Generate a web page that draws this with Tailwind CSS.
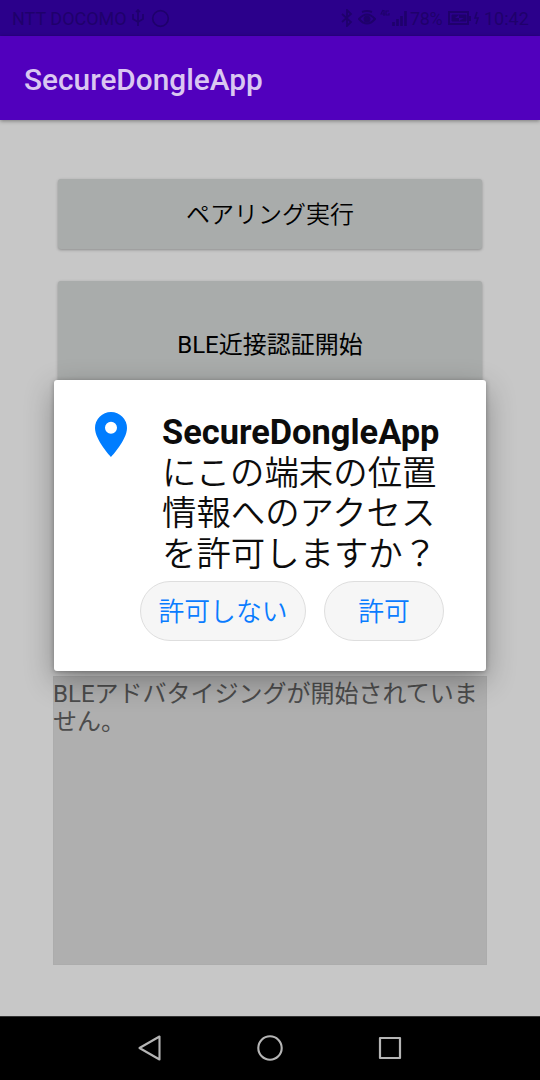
<!DOCTYPE html>
<html lang="ja">
<head>
<meta charset="utf-8">
<title>SecureDongleApp</title>
<script src="https://cdn.jsdelivr.net/npm/@tailwindcss/browser@4"></script>
</head>
<body class="font-['Roboto','Noto_Sans_CJK_JP',sans-serif] bg-[#c7c7c7]">
<div class="relative w-[540px] h-[1080px] overflow-hidden flex flex-col bg-[#c7c7c7]">
  <div class="h-9 shrink-0 bg-[#2b008b] flex items-center justify-between px-3 text-[18px] leading-9 text-[#1f006c]">
    <div class="flex items-center whitespace-nowrap">
      <span class="w-[115px] pt-0.5">NTT DOCOMO</span>
      <svg class="ml-1 w-3.5 h-[18px]" viewBox="0 0 14 18" fill="none" stroke="currentColor" stroke-width="1.7"><path d="M7 1v16M2 5v5l5 3 5-3V5M5 3l2-2 2 2"/></svg>
      <svg class="ml-1.5 w-[19px] h-[19px]" viewBox="0 0 19 19" fill="none" stroke="currentColor" stroke-width="1.7"><circle cx="9.5" cy="9.5" r="7.8"/></svg>
    </div>
    <div class="flex items-center whitespace-nowrap">
      <svg class="w-3 h-[18px]" viewBox="0 0 12 18" fill="none" stroke="currentColor" stroke-width="1.8"><path d="M1 5l9 8-4 4V1l4 4-9 8"/></svg>
      <svg class="ml-[5px] w-[18px] h-[18px]" viewBox="0 0 18 18" fill="none" stroke="currentColor" stroke-width="2"><path d="M1 10q8-9 16 0-8 9-16 0zM4 3q5-2 10 0"/><circle cx="9" cy="10" r="2.500" fill="currentColor"/></svg>
      <svg class="ml-1 w-[30px] h-[18px]" viewBox="0 0 30 18" fill="none" stroke="currentColor"><path d="M3 1L1 5h4M4 1v6M9 2H6v4h3V4" stroke-width="1.2"/><path d="M13.500 17v-4M17.500 17v-7M21.500 17V7M25.500 17V2" stroke-width="2.600"/></svg>
      <span class="w-[36px] pt-0.5 tracking-[-0.4px]">78%</span>
      <svg class="ml-0.5 w-[33px] h-[18px]" viewBox="0 0 33 18" fill="none" stroke="currentColor"><path d="M1 3h19v12H1zM22 7v5" stroke-width="2"/><path d="M4 6h14v6H4z" fill="currentColor"/><path d="M11 6l-4 3h4v3l5-3h-5z" fill="#2b008b" stroke="none"/><path d="M29 3l-2 6h3l-2 6" stroke-width="1.600"/></svg>
      <span class="ml-[3px] w-[44px] pt-0.5">10:42</span>
    </div>
  </div>
  <header class="h-[84px] shrink-0 bg-[#5100bd] px-6 flex items-center text-[29.800px] font-medium text-[#dac7f1] shadow-[0_1px_4px_#00000066] pt-[5px]"><h1 class="w-[239px] whitespace-nowrap">SecureDongleApp</h1></header>
  <main class="flex-1 pt-[59px] px-[58px] flex flex-col text-[24px]">
    <button class="h-[70px] shrink-0 pt-0.5 rounded-[3px] bg-[#a9acab] text-black shadow-[0_1px_3px_#0000004d] font-[350]">ペアリング実行</button>
    <button class="mt-8 h-[130px] shrink-0 pb-0.5 rounded-[3px] bg-[#a9acab] text-black shadow-[0_1px_3px_#0000004d]">BLE近接認証開始</button>
    <div class="mt-[265px] -mx-[5px] h-[289px] shrink-0 bg-[#afafaf] border border-[#acacac] text-[#4c4c4c] leading-[28px] pt-[3px]"><p class="-ml-px">BLEアドバタイジングが開始されていません。</p></div>
  </main>
  <nav class="h-16 shrink-0 bg-black border-t border-[#333] pb-0.5 flex items-center justify-center gap-24 text-[#b5b5b5]">
    <svg class="w-6 h-7" viewBox="0 0 24 28" fill="none" stroke="currentColor" stroke-width="2.100" stroke-linejoin="round"><path d="M22.500 2.500v23L2.500 14z"/></svg>
    <svg class="w-[26px] h-[26px]" viewBox="0 0 26 26" fill="none" stroke="currentColor" stroke-width="2.100"><circle cx="13" cy="13" r="11.700"/></svg>
    <svg class="-ml-px mr-px w-6 h-6" viewBox="0 0 24 24" fill="none" stroke="currentColor" stroke-width="2.200" stroke-linejoin="round"><path d="M2 2h20v20H2z"/></svg>
  </nav>
  <section role="dialog" class="absolute left-[54px] top-[380px] w-[432px] h-[291px] rounded-[3px] bg-white shadow-[0_10px_30px_#00000050,0_1px_5px_#0000004d] flex flex-col">
    <div class="flex pl-[41px] pt-[32px]">
      <svg class="w-8 h-[45px] shrink-0" viewBox="0 0 32 45"><path fill="#007dff" fill-rule="evenodd" d="M16 0A16 16 0 0 0 0 16c0 12 16 29 16 29s16-17 16-29A16 16 0 0 0 16 0zm0 9.800a6 6 0 1 1 0 12 6 6 0 0 1 0-12z"/></svg>
      <p class="ml-[35px] text-[34.400px] leading-[40.500px] whitespace-nowrap text-[#0c0c0c] font-[350]"><b>SecureDongleApp</b><br>にこの端末の位置<br>情報へのアクセス<br>を許可しますか？</p>
    </div>
    <div class="flex pl-[86px] mt-[7px] gap-[18px] text-[25.800px] text-[#0a7cff] font-[350]">
      <button class="w-[166px] h-[60px] pt-0.5 rounded-full border border-[#dedede] bg-[#f6f6f6] whitespace-nowrap">許可しない</button>
      <button class="w-[120px] h-[60px] pt-0.5 rounded-full border border-[#dedede] bg-[#f6f6f6]">許可</button>
    </div>
  </section>
</div>
</body>
</html>
